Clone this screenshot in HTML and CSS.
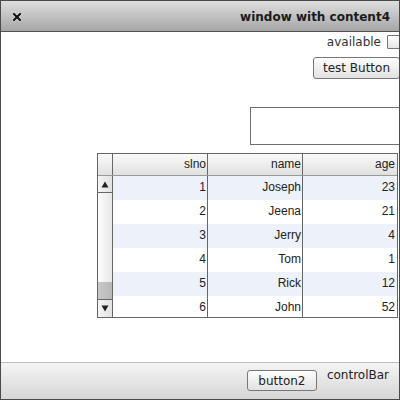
FILE: index.html
```html
<!DOCTYPE html>
<html>
<head>
<meta charset="utf-8">
<link rel="stylesheet" href="styles.css">
</head>
<body>
<div class="window">
  <div class="titlebar">
    <svg class="close" width="10" height="10" viewBox="0 0 10 10"><path d="M2 2L8 8M8 2L2 8" stroke="#fff" stroke-width="3.4" stroke-linecap="square" opacity="0.6"/><path d="M2 2L8 8M8 2L2 8" stroke="#111" stroke-width="2.2" stroke-linecap="square"/></svg>
    <span class="title">window with content4</span>
  </div>
  <div class="content">
    <div class="avail-row">
      <span class="label">available</span>
      <span class="checkbox"></span>
    </div>
    <div class="btn-row"><button class="btn">test Button</button></div>
    <div class="field-row"><div class="field"></div></div>
    <div class="table">
      <div class="thead">
        <div class="hcell corner"></div>
        <div class="hcell">slno</div>
        <div class="hcell">name</div>
        <div class="hcell last">age</div>
      </div>
      <div class="tbody">
        <div class="scrollbar">
          <div class="sb-btn"><svg width="8" height="7" viewBox="0 0 8 7"><path d="M4 0.5L7.5 6.5H0.5Z" fill="#222"/></svg></div>
          <div class="sb-track"><div class="sb-thumb"></div></div>
          <div class="sb-btn down"><svg width="8" height="7" viewBox="0 0 8 7"><path d="M0.5 0.5H7.5L4 6.5Z" fill="#222"/></svg></div>
        </div>
        <div class="rows">
          <div class="row odd"><div class="cell">1</div><div class="cell">Joseph</div><div class="cell last">23</div></div>
          <div class="row"><div class="cell">2</div><div class="cell">Jeena</div><div class="cell last">21</div></div>
          <div class="row odd"><div class="cell">3</div><div class="cell">Jerry</div><div class="cell last">4</div></div>
          <div class="row"><div class="cell">4</div><div class="cell">Tom</div><div class="cell last">1</div></div>
          <div class="row odd"><div class="cell">5</div><div class="cell">Rick</div><div class="cell last">12</div></div>
          <div class="row"><div class="cell">6</div><div class="cell">John</div><div class="cell last">52</div></div>
        </div>
      </div>
    </div>
  </div>
  <div class="controlbar">
    <button class="btn btn2">button2</button>
    <span class="cb-label">controlBar</span>
  </div>
</div>
</body>
</html>
```
FILE: styles.css
```css
* { box-sizing: border-box; }
html, body { margin: 0; padding: 0; background: #fff; }
body { font-family: "DejaVu Sans", sans-serif; font-size: 12px; color: #222; }

.window {
  width: 400px; height: 400px;
  border: 1px solid #4a4a4a;
  display: flex; flex-direction: column;
  overflow: hidden;
}

.titlebar {
  height: 31px;
  flex: none;
  background: linear-gradient(#dedede, #a6a6a6);
  border-bottom: 1px solid #505050;
  display: flex; align-items: center; justify-content: space-between;
  padding: 0 9px 0 11px;
}
.close { display: block; margin-top: 1px; }
.title { font-weight: bold; font-size: 12px; color: #1a1a1a; margin-top: 1px; }

.content {
  flex: 1;
  display: flex; flex-direction: column; align-items: flex-end;
  overflow: hidden;
  background: #fff;
}
.avail-row {
  margin-top: 3px; height: 14px;
  display: flex; align-items: center; gap: 6px;
  margin-right: -2px;
}
.label { color: #333; line-height: 14px; }
.checkbox {
  width: 14px; height: 14px;
  border: 1px solid #777;
  border-radius: 1px;
  background: linear-gradient(#fff, #e4e4e4);
}
.btn-row { margin-top: 8px; }
.btn {
  font-family: "DejaVu Sans", sans-serif; font-size: 12px; color: #222;
  height: 22px; padding: 0;
  white-space: nowrap;
  border: 1px solid #777; border-radius: 3px;
  background: linear-gradient(#fdfdfd, #e2e2e2);
  display: block; margin: 0;
}
.btn-row .btn { width: 87px; margin-right: -1px; }
.field-row { margin-top: 28px; margin-right: -2px; }
.field { width: 151px; height: 38px; border: 1px solid #6e6e6e; background: #fff; }

.table {
  align-self: flex-start;
  margin-left: 96px; margin-top: 8px;
  width: 301px;
  border: 1px solid #666;
  font-family: "Liberation Sans", Arial, sans-serif; font-size: 12px; color: #222;
}
.thead {
  display: grid; grid-template-columns: 15px 95px 95px 94px;
  height: 22px;
  background: linear-gradient(#fafafa, #e0e0e0);
  border-bottom: 1px solid #999;
}
.hcell {
  border-right: 1px solid #666;
  text-align: right; padding-right: 1px;
  line-height: 21px;
}
.hcell.last { border-right: none; }
.tbody { display: flex; height: 141px; overflow: hidden; }
.scrollbar {
  width: 15px; flex: none;
  border-right: 1px solid #666;
  display: flex; flex-direction: column;
}
.sb-btn {
  height: 17px; flex: none;
  border-bottom: 1px solid #666;
  background: linear-gradient(90deg, #f4f4f4, #e2e2e2);
  display: flex; align-items: center; justify-content: center;
}
.sb-btn.down { border-bottom: none; border-top: 1px solid #666; height: 18px; }
.sb-track {
  flex: 1;
  background: linear-gradient(90deg, #fbfbfb, #e8e8e8);
  display: flex; flex-direction: column; justify-content: flex-end;
}
.sb-thumb { height: 17px; background: linear-gradient(90deg, #c8c8c8, #b8b8b8); }
.rows { flex: 1; }
.row {
  display: grid; grid-template-columns: 95px 95px 94px;
  height: 24px;
}
.row.odd { background: #edf1f9; }
.cell {
  border-right: 1px solid #666;
  text-align: right; padding-right: 1px;
  line-height: 23px;
}
.cell.last { border-right: none; padding-right: 2px; }
.hcell.last { padding-right: 2px; }

.controlbar {
  height: 37px; flex: none;
  border-top: 1px solid #bdbdbd;
  background: linear-gradient(#f4f4f4, #d6d6d6);
  display: flex; align-items: flex-start; justify-content: flex-end;
  padding-right: 10px;
}
.btn2 { margin-top: 7px; height: 21px; width: 70px; }
.cb-label { margin-left: 10px; margin-top: 5px; color: #222; }
```
